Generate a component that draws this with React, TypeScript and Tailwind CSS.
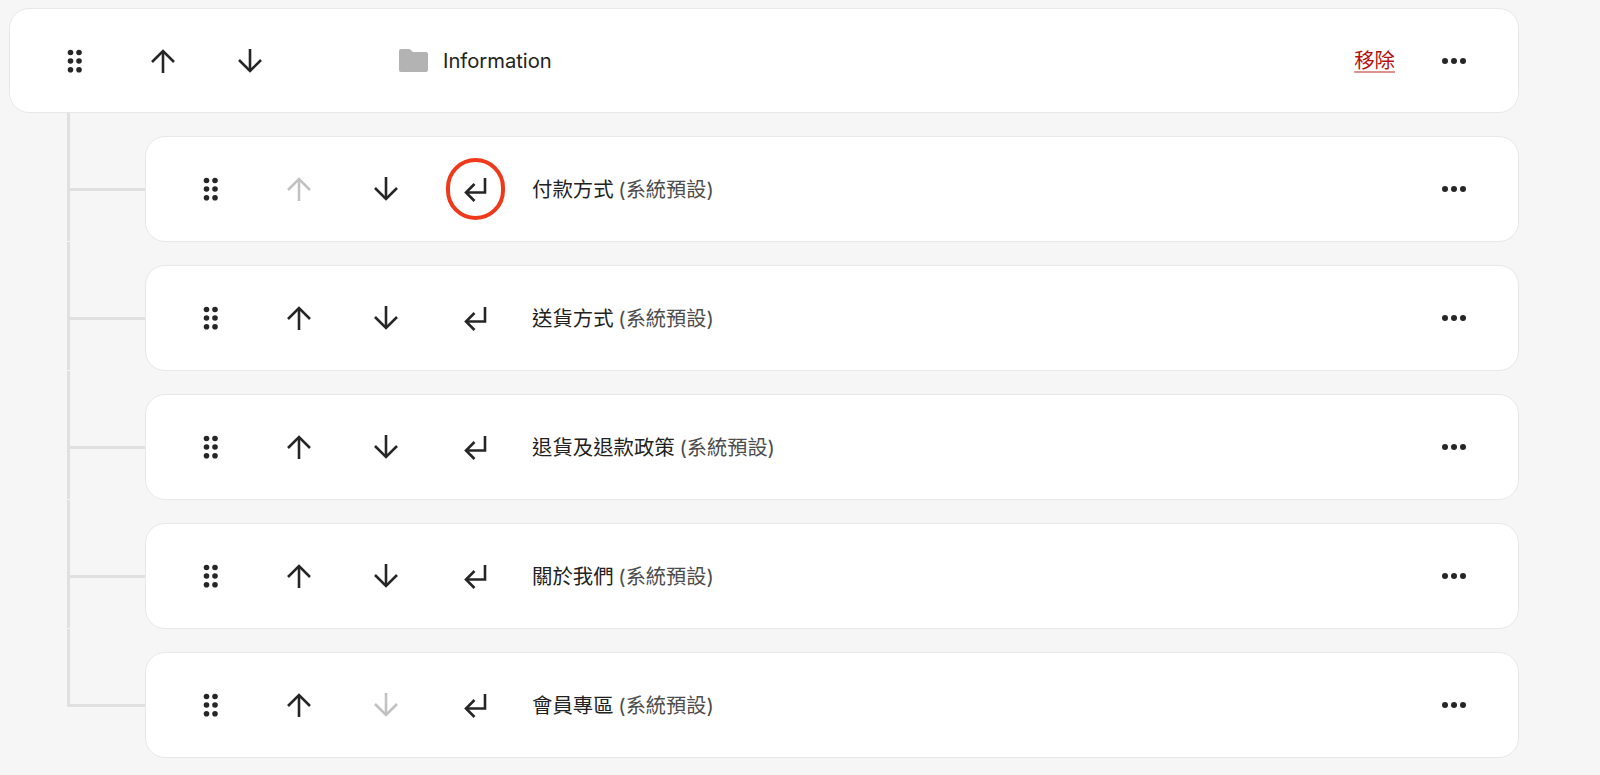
import React from "react";

const font = { fontFamily: '"Inter", "Noto Sans CJK TC", sans-serif' };

const DragIcon = () => (
  <svg width="16" height="24" viewBox="0 0 16 24" fill="#262626">
    <circle cx="3.5" cy="3.5" r="2.8" />
    <circle cx="12" cy="3.5" r="2.8" />
    <circle cx="3.5" cy="12" r="2.8" />
    <circle cx="12" cy="12" r="2.8" />
    <circle cx="3.5" cy="20.7" r="2.8" />
    <circle cx="12" cy="20.7" r="2.8" />
  </svg>
);

const UpIcon = ({ muted = false }: { muted?: boolean }) => (
  <svg width="26" height="24" viewBox="0 0 26 24" fill="none" stroke={muted ? "#c2c2c2" : "#262626"} strokeWidth="2.6">
    <path d="M13 24V2" />
    <path d="M2 13 13 2l11 11" />
  </svg>
);

const DownIcon = ({ muted = false }: { muted?: boolean }) => (
  <svg width="26" height="24" viewBox="0 0 26 24" fill="none" stroke={muted ? "#c2c2c2" : "#262626"} strokeWidth="2.6">
    <path d="M13 0v22" />
    <path d="M2 11l11 11 11-11" />
  </svg>
);

const ReturnIcon = () => (
  <svg width="26" height="28" viewBox="0 0 26 28" fill="none" stroke="#262626" strokeWidth="2.6">
    <path d="M22 3v14.5H3" />
    <path d="M11.5 9 3 17.5l8.5 8.5" />
  </svg>
);

const MoreIcon = () => (
  <svg width="26" height="8" viewBox="0 0 26 8" fill="#262626">
    <circle cx="4" cy="4" r="3" />
    <circle cx="13" cy="4" r="3" />
    <circle cx="22" cy="4" r="3" />
  </svg>
);

const FolderIcon = () => (
  <svg width="29" height="23" viewBox="0 0 29 23" fill="#b3b3b3">
    <path d="M0 2a2 2 0 0 1 2-2h8.5l3.5 3h13a2 2 0 0 1 2 2v16a2 2 0 0 1-2 2H2a2 2 0 0 1-2-2z" />
  </svg>
);

const children = [
  { name: "付款方式", upMuted: true, downMuted: false, circled: true },
  { name: "送貨方式", upMuted: false, downMuted: false, circled: false },
  { name: "退貨及退款政策", upMuted: false, downMuted: false, circled: false },
  { name: "關於我們", upMuted: false, downMuted: false, circled: false },
  { name: "會員專區", upMuted: false, downMuted: true, circled: false }
];

const App: React.FC = () => {
  return (
    <div className="w-[1600px] h-[775px] overflow-hidden bg-[#f6f6f6] pt-[8px] pl-[9px] text-[20.2px] text-[#222222]" style={font}>
      {/* Parent item */}
      <div className="flex items-center w-[1510px] h-[105px] bg-white border border-[#e8e8e8] rounded-[20px]">
        <div className="flex justify-center w-[16px] ml-[57px]"><DragIcon /></div>
        <div className="ml-[67px]"><UpIcon /></div>
        <div className="ml-[61px]"><DownIcon /></div>
        <div className="ml-[136px]"><FolderIcon /></div>
        <span className="ml-[15px] pt-[2px]">Information</span>
        <a className="ml-auto pt-[2px] text-[20.4px] text-[#b3120e] underline decoration-2 decoration-[#dc9290] underline-offset-[3px]">移除</a>
        <div className="ml-[46px] mr-[51px]"><MoreIcon /></div>
      </div>

      {/* Children with tree connectors */}
      <div className="ml-[58px]">
        {children.map((item, i) => {
          const last = i === children.length - 1;
          return (
            <div key={item.name} className="flex h-[129px]">
              {last ? (
                <div className="w-[78px] h-[78px] border-l-[3px] border-b-[3px] border-[#e0e0e0]" />
              ) : (
                <div className="flex items-end w-[78px] h-[128px] border-l-[3px] border-[#e0e0e0]">
                  <div className="w-full h-[3px] bg-[#e0e0e0] mb-[50px]" />
                </div>
              )}
              <div className="flex items-center w-[1374px] h-[106px] mt-[23px] bg-white border border-[#e8e8e8] rounded-[20px]">
                <div className="flex justify-center w-[16px] ml-[57px]"><DragIcon /></div>
                <div className="ml-[67px]"><UpIcon muted={item.upMuted} /></div>
                <div className="ml-[61px]"><DownIcon muted={item.downMuted} /></div>
                <div className="relative ml-[64px]">
                  <ReturnIcon />
                  {item.circled && (
                    <div className="absolute left-[-17px] top-[-17px] w-[59px] h-[62px] rounded-full border-[4px] border-[#ee3a1a]" />
                  )}
                </div>
                <span className="ml-[43px] pt-[2px] whitespace-nowrap text-[20.4px]">
                  {item.name} <span className="-ml-px text-[#4d4d4d] text-[20.2px]">(系統預設)</span>
                </span>
                <div className="ml-auto mr-[51px]"><MoreIcon /></div>
              </div>
            </div>
          );
        })}
      </div>
    </div>
  );
};

export default App;
